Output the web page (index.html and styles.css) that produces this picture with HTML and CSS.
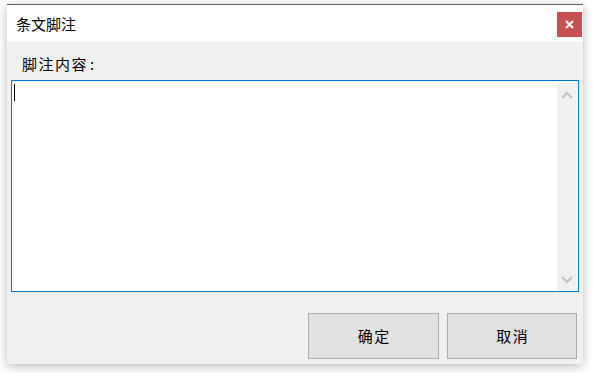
FILE: index.html
```html
<!DOCTYPE html>
<html lang="zh">
<head>
<meta charset="utf-8">
<title>条文脚注</title>
<link rel="stylesheet" href="styles.css">
</head>
<body>
<div class="window">
  <div class="titlebar">
    <span class="title">条文脚注</span>
    <button class="close" aria-label="关闭">
      <svg width="9" height="9" viewBox="0 0 9 9"><path d="M1 1L8 8M8 1L1 8" stroke="#fff" stroke-width="2" fill="none"/></svg>
    </button>
  </div>
  <div class="content">
    <div class="label">脚注内容<span class="colon">:</span></div>
    <div class="textbox">
      <div class="editor"><span class="caret"></span></div>
      <div class="scrollbar">
        <svg width="12" height="8" viewBox="0 0 12 8"><path d="M1 7L6 2L11 7" stroke="#c2c2c2" stroke-width="2" fill="none"/></svg>
        <svg width="12" height="8" viewBox="0 0 12 8"><path d="M1 1L6 6L11 1" stroke="#c2c2c2" stroke-width="2" fill="none"/></svg>
      </div>
    </div>
    <div class="buttons">
      <button class="btn ok">确定</button>
      <button class="btn cancel">取消</button>
    </div>
  </div>
</div>
</body>
</html>
```

FILE: styles.css
```css
html, body {
  margin: 0;
  padding: 0;
  background: #ffffff;
}
body {
  width: 593px;
  height: 373px;
  overflow: hidden;
  font-family: "Noto Sans CJK SC", "Noto Sans", sans-serif;
}
.window {
  margin: 4px 0 0 7px;
  width: 576px;
  height: 360px;
  display: flex;
  flex-direction: column;
  box-shadow: 0 2px 10px rgba(0,0,0,0.28);
  background: #f0f0f0;
}
.titlebar {
  height: 37px;
  border-top: 1px solid #5f5f5f;
  background: #ffffff;
  display: flex;
  justify-content: space-between;
  align-items: flex-start;
  padding-left: 9px;
}
.title {
  font-size: 15px;
  line-height: 20px;
  margin-top: 9px;
  color: #000;
}
.close {
  width: 25px;
  height: 25px;
  margin: 7px 1px 0 0;
  padding: 0;
  border: none;
  background: #c75050;
  display: flex;
  align-items: center;
  justify-content: center;
}
.content {
  flex: 1;
  display: flex;
  flex-direction: column;
  padding: 0 4px;
}
.label {
  font-size: 15px;
  line-height: 20px;
  letter-spacing: 1.5px;
  padding-top: 12px;
  margin-bottom: 6px;
  margin-left: 11px;
  color: #000;
}
.colon {
  margin-left: 2px;
}
.textbox {
  height: 212px;
  box-sizing: border-box;
  border: 1px solid #0078d7;
  background: #ffffff;
  display: flex;
}
.editor {
  flex: 1;
  padding: 3px 0 0 2px;
}
.caret {
  display: block;
  width: 1px;
  height: 17px;
  background: #000;
}
.scrollbar {
  width: 20px;
  margin: 2px 1px 0 0;
  height: 207px;
  background: #f0f0f0;
  display: flex;
  flex-direction: column;
  justify-content: space-between;
  align-items: center;
  padding: 8px 0 6px;
  box-sizing: border-box;
}
.buttons {
  margin-top: 21px;
  display: flex;
  justify-content: flex-end;
  gap: 8px;
  padding-right: 2px;
}
.btn {
  height: 46px;
  border: 1px solid #adadad;
  background: #e1e1e1;
  font-family: "Noto Sans CJK SC", "Noto Sans", sans-serif;
  font-size: 15px;
  letter-spacing: 1.5px;
  padding: 0 0 2px 1.5px;
  color: #000;
}
.ok { width: 131px; }
.cancel { width: 130px; }
```
